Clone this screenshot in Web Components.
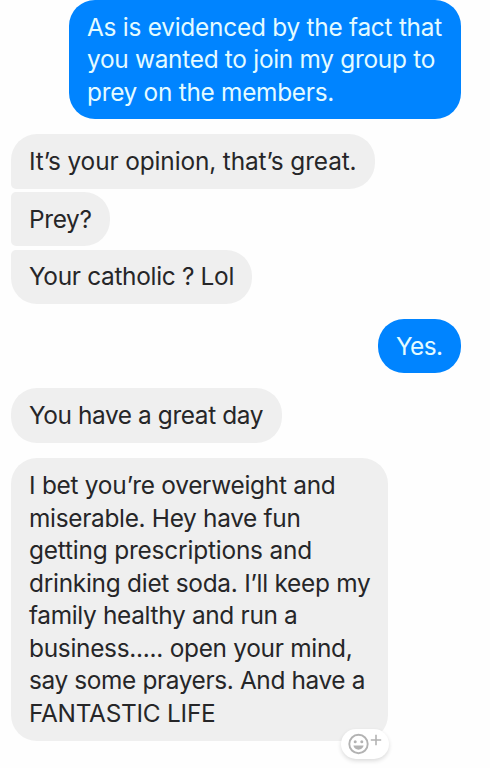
<!DOCTYPE html>
<html lang="en">
<head>
<meta charset="utf-8">
<title>Conversation</title>
<style>
  html, body { margin: 0; background: #fefefe; }
  body { height: 768px; overflow: hidden; }
</style>
</head>
<body>
<chat-thread>
  <chat-bubble side="out" style="--w:392px">
    <chat-line width="355">As is evidenced by the fact that</chat-line>
    <chat-line width="348">you wanted to join my group to</chat-line>
    <chat-line width="247">prey on the members.</chat-line>
  </chat-bubble>
  <chat-bubble group="first" style="--w:364px;--gap:15px"><chat-line width="327.5">It’s your opinion, that’s great.</chat-line></chat-bubble>
  <chat-bubble group="middle" style="--w:99px;--gap:3.3px"><chat-line width="62.5">Prey?</chat-line></chat-bubble>
  <chat-bubble group="last" style="--w:241px;--gap:3.3px"><chat-line width="205">Your catholic ? Lol</chat-line></chat-bubble>
  <chat-bubble side="out" style="--w:83px;--gap:15px"><chat-line width="46.5">Yes.</chat-line></chat-bubble>
  <chat-bubble style="--w:271px;--gap:15.2px"><chat-line width="234">You have a great day</chat-line></chat-bubble>
  <chat-bubble style="--w:377px;--gap:15.2px">
    <chat-line width="306.5">I bet you’re overweight and</chat-line>
    <chat-line width="271.5">miserable. Hey have fun</chat-line>
    <chat-line width="283">getting prescriptions and</chat-line>
    <chat-line width="341.5">drinking diet soda. I’ll keep my</chat-line>
    <chat-line width="268.5">family healthy and run a</chat-line>
    <chat-line width="323.5">business..... open your mind,</chat-line>
    <chat-line width="336">say some prayers. And have a</chat-line>
    <chat-line width="186.5">FANTASTIC LIFE</chat-line>
    <reaction-button slot="badge"></reaction-button>
  </chat-bubble>
</chat-thread>
<script>
class ChatThread extends HTMLElement {
  constructor() {
    super();
    this.attachShadow({ mode: 'open' }).innerHTML = `
      <style>
        :host { display: flex; flex-direction: column; align-items: flex-start;
          box-sizing: border-box; width: 490px; padding: 0 29px 0 11px; margin-top: -0.4px;
          font: 400 24.4px/32.6px Inter, "Liberation Sans", sans-serif; }
      </style><slot></slot>`;
  }
}
class ChatBubble extends HTMLElement {
  constructor() {
    super();
    this.attachShadow({ mode: 'open' }).innerHTML = `
      <style>
        :host { display: block; position: relative; box-sizing: border-box; flex: none;
          width: var(--w); margin-top: var(--gap, 0); padding: 10.9px 0 10.9px 18px;
          border-radius: 26px; background: #efefef; color: #262628; }
        :host([side="out"]) { align-self: flex-end; background: #0084ff; color: #e4fbff; }
        :host([group="first"]) { border-bottom-left-radius: 5px; }
        :host([group="middle"]) { border-top-left-radius: 5px; border-bottom-left-radius: 5px; }
        :host([group="last"]) { border-top-left-radius: 5px; }
        ::slotted([slot="badge"]) { position: absolute; right: -1px; bottom: -18px; }
      </style><slot></slot><slot name="badge"></slot>`;
  }
}
class ChatLine extends HTMLElement {
  constructor() {
    super();
    this.attachShadow({ mode: 'open' }).innerHTML = `
      <style>
        :host { display: block; height: 32.6px; white-space: nowrap; }
        span { display: inline-block; }
      </style><span><slot></slot></span>`;
  }
  /* Tracks the text so that the line fills its set measure. */
  connectedCallback() {
    const span = this.shadowRoot.querySelector('span');
    const natural = span.getBoundingClientRect().width;
    const count = this.textContent.length;
    span.style.letterSpacing = (Number(this.getAttribute('width')) - natural) / count + 'px';
  }
}
class ReactionButton extends HTMLElement {
  constructor() {
    super();
    this.attachShadow({ mode: 'open' }).innerHTML = `
      <style>
        :host { display: block; width: 48px; height: 30px; border-radius: 15px;
          background: #fff; box-shadow: 0 2px 4px rgba(0,0,0,.14); }
        svg { display: block; }
      </style>
      <svg width="48" height="30" viewBox="0 0 48 30" fill="none" stroke="#b3b3b3">
        <circle cx="17.5" cy="15" r="9.2" stroke-width="1.9"/>
        <circle cx="14.2" cy="12.8" r="1.5" fill="#b3b3b3" stroke="none"/>
        <circle cx="20.8" cy="12.8" r="1.5" fill="#b3b3b3" stroke="none"/>
        <path d="M12.4 16.6h10.2c-.5 2.6-2.5 4.1-5.1 4.1s-4.6-1.5-5.1-4.1z" fill="#b3b3b3" stroke="none"/>
        <path d="M35 5.8v10.4M29.8 11h10.4" stroke-width="1.6"/>
      </svg>`;
  }
}
customElements.define('chat-thread', ChatThread);
customElements.define('chat-bubble', ChatBubble);
customElements.define('chat-line', ChatLine);
customElements.define('reaction-button', ReactionButton);
</script>
</body>
</html>
